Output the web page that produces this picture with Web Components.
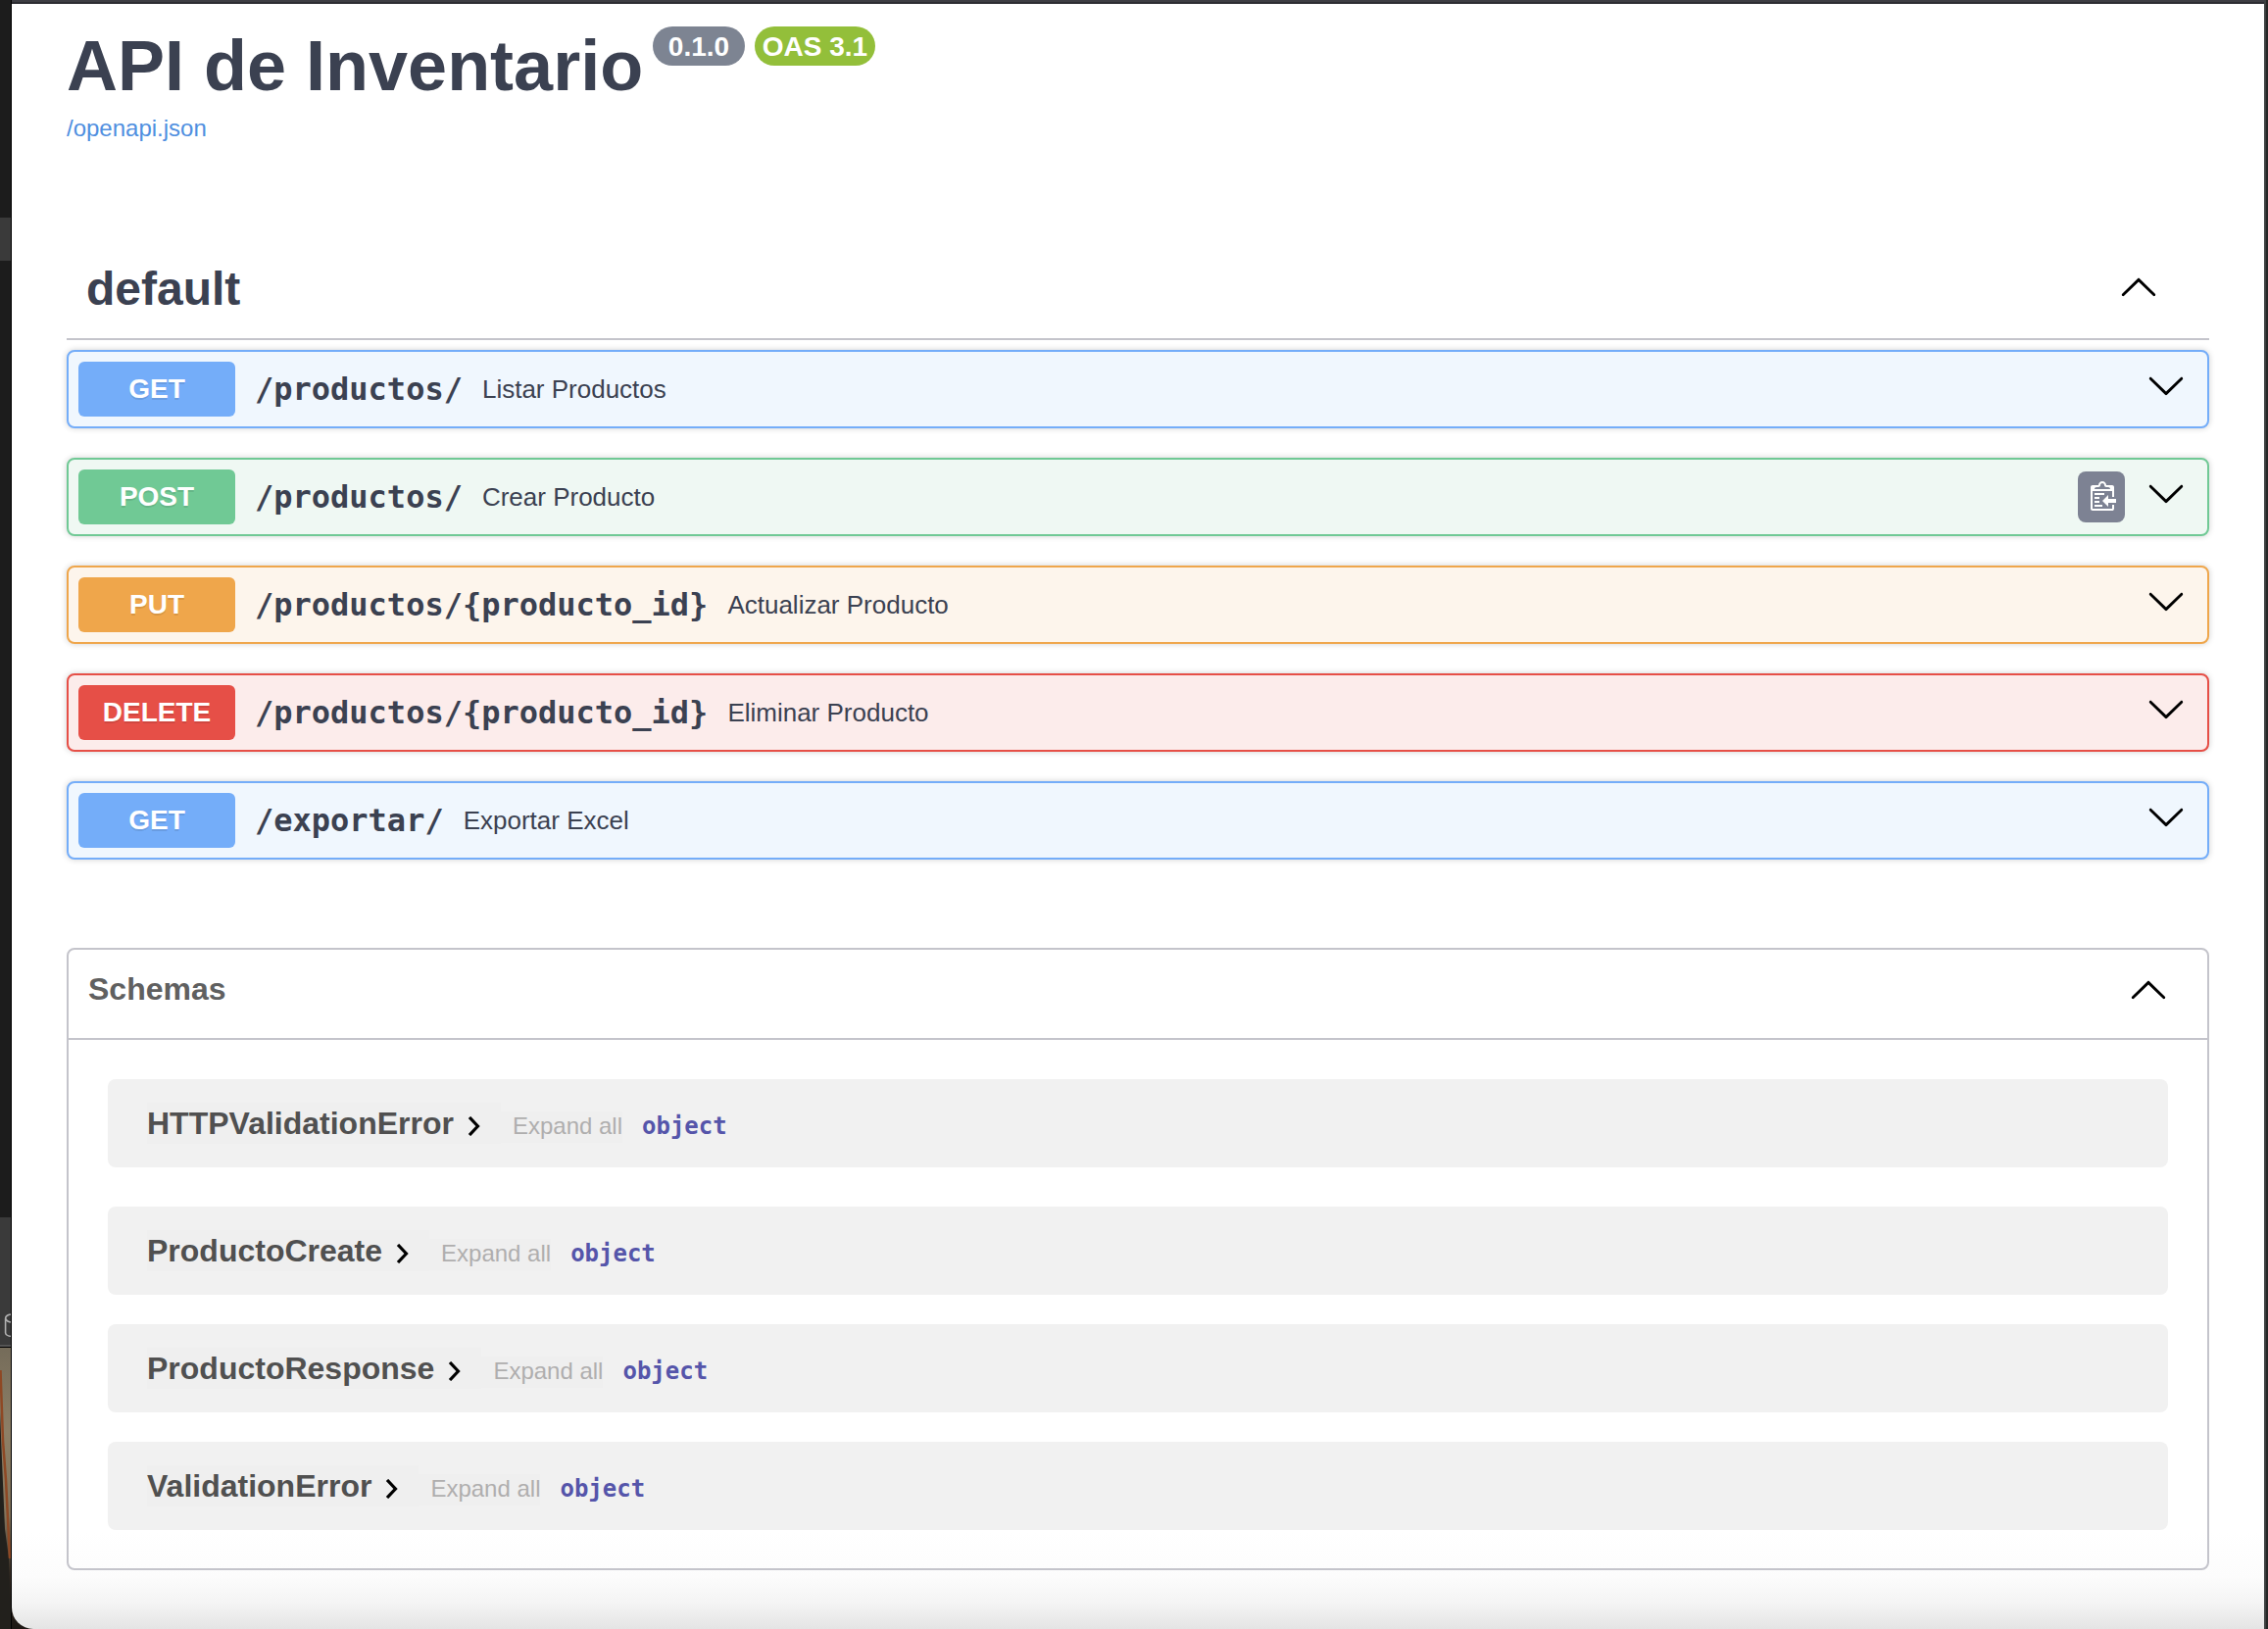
<!DOCTYPE html>
<html lang="es">
<head>
<meta charset="utf-8">
<title>API de Inventario</title>
<style>
html,body{margin:0;padding:0}
body{width:2314px;height:1662px;overflow:hidden;background:#1c1c1c;font-family:"Liberation Sans",Arial,sans-serif;color:#3b4151}
</style>
</head>
<body>
<api-window></api-window>
<script>
const define = (name, html, setup) => customElements.define(name, class extends HTMLElement {
  constructor() {
    super();
    this.attachShadow({ mode: 'open' });
    const t = document.createElement('template');
    t.innerHTML = html;
    this.shadowRoot.append(t.content.cloneNode(true));
  }
  connectedCallback() { if (setup) setup(this, this.shadowRoot); }
});

define('arrow-icon', `<style>:host{display:block;width:40px;height:40px;flex:none}:host([up]) svg{transform:scaleY(-1) translateY(-2px)}svg{display:block;width:40px;height:40px}</style>
<svg viewBox="0 0 20 20"><path d="M17.418 6.109c.272-.268.709-.268.979 0s.271.701 0 .969l-7.908 7.83c-.27.268-.707.268-.979 0l-7.908-7.83c-.27-.268-.27-.701 0-.969.271-.268.709-.268.979 0L10 13.25l7.418-7.141z"/></svg>`);

define('copy-button', `<style>:host{display:flex;width:48px;height:52px;border-radius:8px;background:#7d8293;align-items:center;justify-content:center;flex:none}svg{display:block;width:30px;height:32px}</style>
<svg viewBox="0 0 15 16"><g transform="translate(2,-1)"><path fill="#fff" fill-rule="evenodd" d="M2 13h4v1H2v-1zm5-6H2v1h5V7zm2 3V8l-3 3 3 3v-2h4v-2H9zM4.5 9H2v1h2.5V9zM2 12h2.5v-1H2v1zm9 1h1v2c-.02.28-.11.52-.3.7-.19.18-.42.28-.7.3H1c-.55 0-1-.45-1-1V4c0-.55.45-1 1-1h3c0-1.11.89-2 2-2 1.11 0 2 .89 2 2h3c.55 0 1 .45 1 1v5h-1V6H1v9h10v-2zM2 5h8c0-.55-.45-1-1-1H8c-.55 0-1-.45-1-1s-.45-1-1-1-1 .45-1 1-.45 1-1 1H3c-.55 0-1 .45-1 1z"/></g></svg>`);

define('version-badge', `<style>:host{display:flex;box-sizing:border-box;align-items:center;justify-content:center;height:40px;border-radius:20px;background:var(--badge,#7d8492);color:#fff;font-weight:700;font-size:28px;line-height:40px;padding-top:2px;white-space:nowrap}</style><slot></slot>`);

define('api-operation', `<style>
:host{box-sizing:border-box;display:flex;align-items:center;height:80px;border:2px solid var(--c);border-radius:8px;background:var(--b);box-shadow:0 0 6px rgba(0,0,0,.19);padding:0 22px 0 10px}
.m{width:160px;height:56px;line-height:56px;border-radius:6px;background:var(--c);color:#fff;font-size:28px;font-weight:700;text-align:center;text-shadow:0 2px 0 rgba(0,0,0,.1)}
.p{margin-left:20px;font:700 32px/56px "DejaVu Sans Mono",monospace;white-space:pre}
.s{margin-left:20px;font-size:26px;line-height:56px;flex:1}
arrow-icon{margin-bottom:8px}
</style><div class="m"></div><div class="p"></div><div class="s"><slot></slot></div><slot name="action"></slot><arrow-icon></arrow-icon>`, (h, r) => {
  const [c, b] = { GET: ['#74adf9', '#f0f7fe'], POST: ['#70c995', '#eff8f3'], PUT: ['#efa64b', '#fdf5ec'], DELETE: ['#e64f47', '#fceceb'] }[h.getAttribute('method')];
  h.style.setProperty('--c', c); h.style.setProperty('--b', b);
  r.querySelector('.m').textContent = h.getAttribute('method');
  r.querySelector('.p').textContent = h.getAttribute('path');
});

define('schema-row', `<style>
:host{box-sizing:border-box;display:flex;height:90px;border-radius:8px;background:#f1f1f1;padding:24px 40px}
.t{display:flex;height:42px;background:#efefef;color:#505050;font-size:32px;font-weight:700;line-height:42px;padding-right:21px;white-space:nowrap}
.t svg{display:block;width:13px;height:20px;margin:14px 0 0 14px}
.e{height:32px;margin-top:9px;background:#efefef;color:#afaeae;font-size:24px;line-height:30px;padding-left:12px;white-space:nowrap}
.o{margin:8px 0 0 20px;color:#5555aa;font:700 24px/32px "DejaVu Sans Mono",monospace}
</style><div class="t"><span><slot></slot></span><svg viewBox="0 0 13 20"><path d="M2 1l8.500 9L2 19" fill="none" stroke="#000" stroke-width="3.200"/></svg></div><div class="e">Expand all</div><div class="o">object</div>`);

define('schema-panel', `<style>
:host{box-sizing:border-box;display:block;height:635px;border:2px solid #c4c4cb;border-radius:8px}
header{display:flex;box-sizing:border-box;height:92px;border-bottom:2px solid #c4c4cb;padding:20px 40px 0 20px;justify-content:space-between;color:#606060;font-size:32px;font-weight:700;line-height:40px}
.list{display:flex;flex-direction:column;gap:30px;padding:40px}
</style><header><span>Schemas</span><arrow-icon up></arrow-icon></header><div class="list"><slot></slot></div>`);

define('api-page', `<style>
:host{box-sizing:border-box;display:flex;flex-direction:column;flex:1;background:linear-gradient(#fff 0 1560px,#fcfcfc 1605px,#f4f4f4 1632px,#e4e4e4 1658px);border-bottom-left-radius:22px;padding:23px 56px 0 56px}
.top{display:flex;height:92px}
h1{margin:-1px 0 0;font-size:72px;line-height:82px;font-weight:700;white-space:nowrap;width:598px;height:82px}
.v{width:94px;margin-right:10px}.o{width:123px;--badge:#93bf3a}
.link{color:#4f8fe0;font-size:24px;line-height:28px;height:28px;margin-top:-2px}
.tag{display:flex;box-sizing:border-box;justify-content:space-between;margin-top:100px;height:102px;border-bottom:2px solid #c4c4cb;padding:22px 52px 0 20px}
h2{margin:0;font-size:48px;line-height:56px}
arrow-icon{margin-top:5px}
.ops{display:flex;flex-direction:column;gap:30px;padding-top:10px;height:600px;box-sizing:border-box}
copy-button{margin-right:22px}
schema-panel{margin-top:20px}
.first{margin-bottom:10px}
</style>
<div class="top"><h1>API de Inventario</h1><version-badge class="v">0.1.0</version-badge><version-badge class="o">OAS 3.1</version-badge></div>
<div class="link">/openapi.json</div>
<div class="tag"><h2>default</h2><arrow-icon up></arrow-icon></div>
<div class="ops">
<api-operation method="GET" path="/productos/">Listar Productos</api-operation>
<api-operation method="POST" path="/productos/">Crear Producto<copy-button slot="action"></copy-button></api-operation>
<api-operation method="PUT" path="/productos/{producto_id}">Actualizar Producto</api-operation>
<api-operation method="DELETE" path="/productos/{producto_id}">Eliminar Producto</api-operation>
<api-operation method="GET" path="/exportar/">Exportar Excel</api-operation>
</div>
<schema-panel>
<schema-row class="first">HTTPValidationError</schema-row><schema-row>ProductoCreate</schema-row><schema-row>ProductoResponse</schema-row><schema-row>ValidationError</schema-row>
</schema-panel>`);

define('desktop-edge', `<style>:host{display:block;width:12px;height:1662px;flex:none}svg{display:block;overflow:visible}</style>
<svg width="34" height="1662"><defs><linearGradient id="w" x1="0" y1="0" x2="0" y2="1"><stop offset="0" stop-color="#756c5a"/><stop offset=".3" stop-color="#8d7f66"/><stop offset=".6" stop-color="#83745c"/><stop offset=".8" stop-color="#3a2f26"/><stop offset="1" stop-color="#1d1814"/></linearGradient></defs>
<path fill="#1c1c1c" d="M0 0h12v1662H0z"/><path fill="#3a3a3a" d="M0 222h12v44H0zM0 1242h12v132H0z"/><path fill="#555" d="M0 1372h12v2H0z"/><path fill="#000" d="M0 1374h12v1H0z"/><path fill="url(#w)" d="M0 1375h34v287H0z"/><path fill="#22201c" d="M0 1440L2 1490 5 1560 9 1590 12 1662H0z"/><path fill="none" stroke="#8e4824" stroke-width="2.500" d="M.5 1398L3 1470 6 1510 10 1590"/>
<path fill="none" stroke="#b0b0b0" stroke-width="1.600" d="M12 1341C8 1341 5.600 1343 5.600 1345V1360Q6 1363 12 1363.500M5.600 1345Q7 1349 12 1349"/><path fill="#000" d="M11 0h1v1662h-1z"/></svg>`);

define('api-window', `<style>
:host{display:flex;width:2314px;height:1662px}
.main{display:flex;flex-direction:column;width:2298px;height:1662px;position:relative}
.bar{height:4px;background:linear-gradient(#3d3d43 0 2px,#2d2d32 2px)}
.edge{width:4px;background:linear-gradient(90deg,#3c3f3f 50%,#252626 50%)}
</style><desktop-edge></desktop-edge><div class="main"><div class="bar"></div><api-page></api-page></div><div class="edge"></div>`);
</script>
</body>
</html>
